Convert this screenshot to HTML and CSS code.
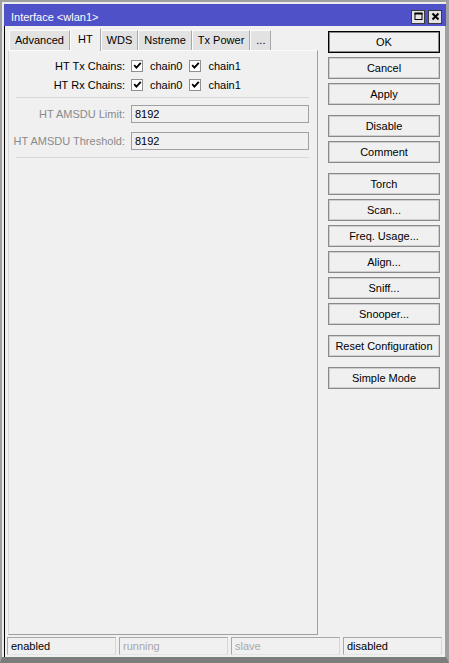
FILE: index.html
```html
<!DOCTYPE html>
<html>
<head>
<meta charset="utf-8">
<link rel="stylesheet" href="styles.css">
</head>
<body>
<div class="desk">
  <div class="dialog">
    <div class="titlebar">
      <span class="title">Interface &lt;wlan1&gt;</span>
      <div class="tbtns">
        <span class="tbtn"><svg width="11" height="11" viewBox="0 0 11 11"><rect x="2" y="2.5" width="7" height="6" fill="none" stroke="#000" stroke-width="1"/><rect x="1.5" y="1.5" width="8" height="2" fill="#000"/></svg></span>
        <span class="tbtn"><svg width="11" height="11" viewBox="0 0 11 11"><path d="M2.5 2.5 L8.5 8.5 M8.5 2.5 L2.5 8.5" stroke="#000" stroke-width="2"/></svg></span>
      </div>
    </div>
    <div class="dbody">
      <div class="main">
        <div class="leftcol">
          <div class="tabs">
            <span class="tab">Advanced</span>
            <span class="tab sel">HT</span>
            <span class="tab">WDS</span>
            <span class="tab">Nstreme</span>
            <span class="tab">Tx Power</span>
            <span class="tab">...</span>
          </div>
          <div class="panel">
            <div class="row">
              <span class="lbl">HT Tx Chains:</span>
              <span class="cb"><svg width="9" height="9" viewBox="0 0 9 9"><path d="M1.2 4.2 L3.4 6.6 L7.8 1.8" fill="none" stroke="#000" stroke-width="1.8"/></svg></span>
              <span class="cbl">chain0</span>
              <span class="cb"><svg width="9" height="9" viewBox="0 0 9 9"><path d="M1.2 4.2 L3.4 6.6 L7.8 1.8" fill="none" stroke="#000" stroke-width="1.8"/></svg></span>
              <span class="cbl">chain1</span>
            </div>
            <div class="row">
              <span class="lbl">HT Rx Chains:</span>
              <span class="cb"><svg width="9" height="9" viewBox="0 0 9 9"><path d="M1.2 4.2 L3.4 6.6 L7.8 1.8" fill="none" stroke="#000" stroke-width="1.8"/></svg></span>
              <span class="cbl">chain0</span>
              <span class="cb"><svg width="9" height="9" viewBox="0 0 9 9"><path d="M1.2 4.2 L3.4 6.6 L7.8 1.8" fill="none" stroke="#000" stroke-width="1.8"/></svg></span>
              <span class="cbl">chain1</span>
            </div>
            <div class="sep sep1"></div>
            <div class="frow">
              <span class="lbl dim">HT AMSDU Limit:</span>
              <span class="field">8192</span>
            </div>
            <div class="frow frow2">
              <span class="lbl dim">HT AMSDU Threshold:</span>
              <span class="field">8192</span>
            </div>
            <div class="sep sep2"></div>
          </div>
        </div>
        <div class="rightcol">
          <div class="btn ok">OK</div>
          <div class="btn">Cancel</div>
          <div class="btn">Apply</div>
          <div class="btn grp">Disable</div>
          <div class="btn">Comment</div>
          <div class="btn grp">Torch</div>
          <div class="btn">Scan...</div>
          <div class="btn">Freq. Usage...</div>
          <div class="btn">Align...</div>
          <div class="btn">Sniff...</div>
          <div class="btn">Snooper...</div>
          <div class="btn grp">Reset Configuration</div>
          <div class="btn grp">Simple Mode</div>
        </div>
      </div>
      <div class="status">
        <span class="cell">enabled</span>
        <span class="cell dim">running</span>
        <span class="cell dim">slave</span>
        <span class="cell">disabled</span>
      </div>
    </div>
  </div>
</div>
</body>
</html>
```
FILE: styles.css
```css
html, body {
  margin: 0;
  padding: 0;
}
body {
  font-family: "Liberation Sans", Arial, sans-serif;
  font-size: 11px;
  color: #000;
  background: #ececec;
}
.desk {
  box-sizing: border-box;
  width: 449px;
  height: 663px;
  background: #ececec;
  border-top: 2px solid #a0a0a0;
  border-left: 2px solid #a0a0a0;
  border-right: 3px solid #a0a0a0;
  border-bottom: 6px solid #7c7c7c;
  padding: 2px 0 0 2px;
}
.dialog {
  width: 442px;
  height: 653px;
  display: flex;
  flex-direction: column;
}
.titlebar {
  height: 22px;
  background: #4f51c9;
  display: flex;
  align-items: center;
  justify-content: space-between;
  padding: 0 4px 0 7px;
  flex: none;
}
.title {
  color: #fff;
  font-size: 11px;
  margin-top: 3px;
}
.tbtns {
  display: flex;
  gap: 3px;
  margin-top: 3px;
}
.tbtn {
  box-sizing: border-box;
  width: 14px;
  height: 14px;
  background: #e4e4e4;
  border: 1px solid #3a3a3a;
  display: flex;
  align-items: center;
  justify-content: center;
}
.dbody {
  flex: 1;
  background: #f0f0f0;
  border-left: 1px solid #000;
  border-right: 1px solid #a0a0a0;
  display: flex;
  flex-direction: column;
  padding-bottom: 2px;
}
.main {
  flex: 1;
  display: flex;
  padding-left: 3px;
}
.leftcol {
  width: 310px;
  display: flex;
  flex-direction: column;
  padding-top: 2px;
}
.tabs {
  height: 22px;
  display: flex;
  align-items: flex-end;
  padding-left: 1px;
}
.tab {
  box-sizing: border-box;
  height: 20px;
  line-height: 19px;
  padding: 0 5px;
  background: #e2e2e2;
  border-top: 1px solid #fbfbfb;
  border-left: 1px solid #fbfbfb;
  border-right: 1px solid #a8a8a8;
  color: #000;
}
.tab:first-child {
  border-left-color: #fbfbfb;
}
.tab.sel {
  height: 23px;
  line-height: 20px;
  padding: 0 7px 2px;
  background: #f0f0f0;
  margin-bottom: -1px;
  position: relative;
  z-index: 1;
}
.panel {
  flex: 1;
  box-sizing: border-box;
  border-top: 1px solid #fbfbfb;
  border-left: 1px solid #d8d8d8;
  border-right: 1px solid #a0a0a0;
  border-bottom: 1px solid #a0a0a0;
  padding-top: 5px;
}
.row {
  height: 19px;
  display: flex;
  align-items: center;
}
.lbl {
  width: 116px;
  flex: none;
  text-align: right;
  margin-right: 6px;
  white-space: nowrap;
}
.lbl.dim {
  color: #8a8a8a;
}
.cb {
  box-sizing: border-box;
  width: 12px;
  height: 12px;
  background: #fff;
  border: 1px solid #8f8f8f;
  display: flex;
  align-items: center;
  justify-content: center;
  flex: none;
}
.cbl {
  margin: 0 7px 0 7px;
}
.sep {
  height: 1px;
  background: #d9d9d9;
  margin: 0 8px 0 7px;
}
.sep1 {
  margin-top: 3px;
}
.frow {
  display: flex;
  align-items: center;
  height: 18px;
  margin-top: 7px;
}
.frow2 {
  margin-top: 9px;
}
.field {
  box-sizing: border-box;
  width: 178px;
  height: 18px;
  border: 1px solid #a0a0a0;
  background: #f0f0f0;
  padding-left: 3px;
  line-height: 16px;
}
.sep2 {
  margin-top: 7px;
}
.rightcol {
  margin-left: 10px;
  width: 112px;
  padding-top: 5px;
  display: flex;
  flex-direction: column;
  gap: 4px;
}
.btn {
  box-sizing: border-box;
  height: 22px;
  border: 1px solid #8a8a8a;
  box-shadow: inset 0 0 0 1px #cfcfcf;
  background: #f0f0f0;
  text-align: center;
  line-height: 20px;
}
.btn.ok {
  border-color: #000;
  box-shadow: inset 0 0 0 1px #8a8a8a;
}
.btn.grp {
  margin-top: 6px;
}
.status {
  height: 18px;
  margin-top: 2px;
  padding-left: 2px;
  display: grid;
  grid-template-columns: 109px 109px 109px 99px;
  column-gap: 3px;
}
.cell {
  box-sizing: border-box;
  border: 1px solid #a8a8a8;
  border-right-color: #d6d6d6;
  border-bottom-color: #e4e4e4;
  padding-left: 3px;
  line-height: 16px;
}
.cell.dim {
  color: #a8a8a8;
}
```
